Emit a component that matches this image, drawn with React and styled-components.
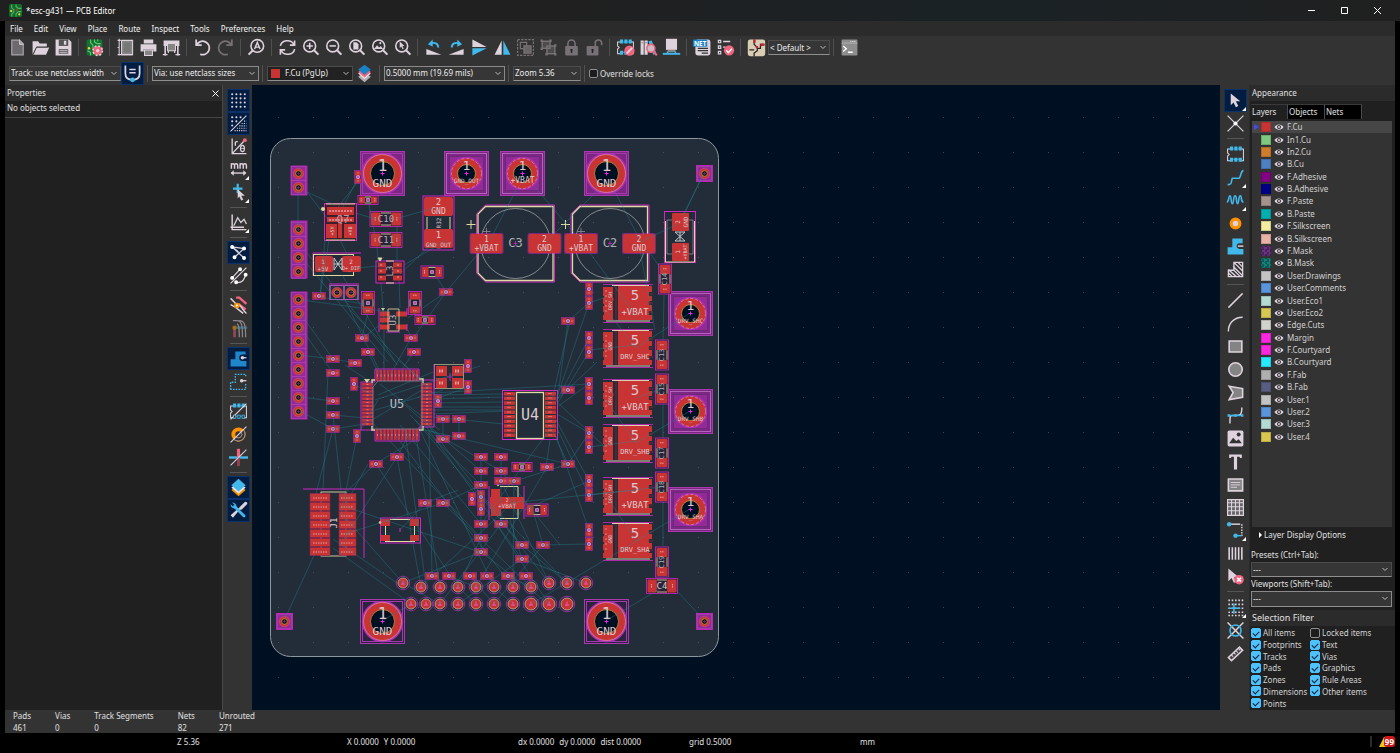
import React from 'react';
import styled, {createGlobalStyle} from "styled-components";

const ink = "#ded3dd";
const blue = "#42b8eb";
const pink = "#f2647e";
const grey = "#848484";
const dim = "#777176";

const GlobalStyle = createGlobalStyle`
    * {
        box-sizing: border-box;
    }
    body {
        margin: 0;
        background-color: black;
        color: #e0e0e0;
        font-family: "Noto Sans", "Open Sans", sans-serif;
        font-size: 8px;
        line-height: 12px;
    }
    button, select, input {
        font: inherit;
        color: inherit;
        margin: 0;
    }
`;

const Window = styled.div`
    height: 100vh;
    min-height: 740px;
    display: flex;
    flex-direction: column;
    overflow: hidden;
`;

const TitleBar = styled.header`
    height: 21px;
    display: flex;
    align-items: center;
    padding: 0 6px 0 9px;
    background: linear-gradient(90deg, #202020 40%, #1a2226 70%, #202020);
`;

const Title = styled.h1`
    flex: 1;
    margin: 0 0 0 4px;
    font-size: 8px;
    font-weight: 400;
    color: white;
`;

const WindowButton = styled.button`
    width: 33px;
    height: 21px;
    padding: 0;
    border: 0;
    background-color: transparent;
    display: flex;
    align-items: center;
    justify-content: center;
`;

const Frame = styled.div`
    flex: 1;
    min-height: 0;
    margin: 0 5px;
    display: flex;
    flex-direction: column;
    background-color: #333333;
`;

const MenuBar = styled.nav`
    height: 15px;
    display: flex;
    align-items: center;
    gap: 11px;
    padding-left: 5px;
    background-color: #2b2b2b;
`;

const MenuLink = styled.a`
    color: #f2f2f2;
    text-decoration: none;
`;

const ToolBar = styled.div`
    height: ${props => props.$low ? "24px" : "25px"};
    display: flex;
    align-items: center;
    padding: ${props => props.$low ? "0 0 0 4px" : "0 0 2px 1px"};
`;

const ToolStrip = styled.div`
    width: 29px;
    padding: 4px 0 0 2px;
    display: flex;
    flex-direction: column;
    align-items: center;
    background-color: #333333;
    flex-shrink: 0;
`;

const ToolButton = styled.button`
    position: relative;
    width: 23px;
    height: 23px;
    flex-shrink: 0;
    padding: 0;
    border: 1px solid ${props => props.$active ? "#0a3168" : "transparent"};
    background-color: ${props => props.$active ? "#031d40" : "transparent"};
    display: flex;
    align-items: center;
    justify-content: center;
`;

const Corner = styled.span`
    position: absolute;
    right: 0;
    bottom: 0;
    border-left: 4px solid transparent;
    border-bottom: 4px solid white;
`;

const Divider = styled.span`
    width: 1px;
    height: 17px;
    margin: 0 4px 0 3px;
    background-color: #505050;
`;

const Rule = styled.span`
    width: 17px;
    height: 1px;
    margin: ${props => props.$wide ? "3px 0 4px" : "3px 0"};
    flex-shrink: 0;
    background-color: #555555;
`;

const Picker = styled.span`
    position: relative;
    display: block;
    width: ${props => props.$width};
    height: ${props => props.$tall ? "16px" : "15px"};
`;

const Select = styled.select`
    appearance: none;
    display: block;
    width: 100%;
    height: 100%;
    padding: 0 14px 0 ${props => props.$swatch ? "17px" : "1px"};
    border: 1px solid ${props => props.$bright ? "#8a8a8a" : "#4c4c4c"};
    border-bottom-color: #8f8f8f;
    border-radius: 0;
    background-color: ${props => props.$swatch ? "#222222" : "#363636"};
    color: #ececec;
`;

const Chevron = styled.svg`
    position: absolute;
    right: 4px;
    top: 5px;
    width: 6px;
    height: 5px;
    pointer-events: none;
`;

const PickerSwatch = styled.span`
    position: absolute;
    left: 4px;
    top: 3px;
    width: 9px;
    height: 9px;
    background-color: #c83434;
    pointer-events: none;
`;

const CheckLabel = styled.label`
    display: flex;
    align-items: center;
    gap: 2px;
    line-height: 11px;
    white-space: nowrap;
`;

const CheckBox = styled.input`
    appearance: none;
    width: ${props => props.$small ? "9px" : "10px"};
    height: ${props => props.$small ? "9px" : "10px"};
    border: 1px solid #8e8e8e;
    border-radius: 2px;
    background-color: #1d1d1d;
    display: grid;
    place-items: center;

    &:checked {
        border-color: #4cc2ff;
        background-color: #4cc2ff;
    }
    &:checked::after {
        content: "";
        width: 5px;
        height: 3px;
        border-left: 1px solid #123;
        border-bottom: 1px solid #123;
        transform: rotate(-45deg);
    }
`;

const Work = styled.main`
    flex: 1;
    min-height: 0;
    display: flex;
`;

const Properties = styled.aside`
    width: 218px;
    flex-shrink: 0;
    background-color: #202020;
    border-right: 1px solid #484848;
`;

const PanelHead = styled.div`
    height: 16px;
    flex-shrink: 0;
    display: flex;
    align-items: center;
    justify-content: space-between;
    padding: 0 2px;
    background-color: #2b2b2b;
`;

const PanelTitle = styled.h2`
    margin: 0;
    font-weight: 400;
    font-size: ${props => props.$large ? "9px" : "8px"};
`;

const CloseButton = styled.button`
    width: 9px;
    height: 9px;
    padding: 0;
    border: 0;
    background-color: transparent;
    display: flex;
`;

const EmptyNote = styled.p`
    margin: 0;
    padding: 1px 2px 3px;
    border-bottom: 1px solid #444444;
`;

const CanvasArea = styled.section`
    flex: 1;
    min-width: 0;
    background-color: #001023;
`;

const Drawing = styled.svg`
    display: block;
    width: 100%;
    height: 100%;
    font-family: "DejaVu Sans Mono", monospace;
`;

const Appearance = styled.aside`
    width: 146px;
    flex-shrink: 0;
    display: flex;
    flex-direction: column;
    background-color: #202020;
    border-left: 1px solid #2b2b2b;
`;

const Tabs = styled.div`
    display: flex;
    margin-top: 3px;
    padding-left: 1px;
`;

const Tab = styled.button`
    width: 37px;
    height: 15px;
    padding: 0 1px;
    border: 0;
    border-right: 1px solid #4a4a4a;
    border-top: 1px solid #3a3a3a;
    text-align: left;
    background-color: ${props => props.$active ? "#202020" : "black"};
`;

const LayerPane = styled.div`
    flex: 1;
    min-height: 0;
    margin: 2px 3px 0 2px;
    background-color: #333333;
`;

const LayerList = styled.ul`
    height: 322px;
    margin: 0;
    padding: 0;
    list-style: none;
    display: grid;
    grid-auto-rows: 1fr;
`;

const LayerRow = styled.li`
    display: flex;
    align-items: center;
    padding-left: 2px;
    background-color: ${props => props.$active ? "#464646" : "transparent"};
    color: #d2d2d2;
`;

const ActiveMark = styled.span`
    margin-right: 2px;
    border: 3px solid transparent;
    border-left: 5px solid ${props => props.$active ? "#4848f0" : "transparent"};
    border-right: 0;
`;

const Swatch = styled.span`
    width: 10px;
    height: 10px;
    margin-right: 3px;
    border: 1px solid rgba(0, 0, 0, 0.15);
    background: ${props => props.$check
        ? `conic-gradient(${props.$color} 25%, ${props.$check} 0 50%, ${props.$color} 0 75%, ${props.$check} 0) 0 0 / 5px 5px`
        : props.$color};
`;

const Eye = styled.svg`
    width: 10px;
    height: 8px;
    margin-right: 3px;
`;

const OptionsToggle = styled.button`
    height: 16px;
    margin-left: 9px;
    padding: 0;
    border: 0;
    background-color: transparent;
    display: flex;
    align-items: center;
    gap: 2px;
`;

const ToggleMark = styled.span`
    border: 3px solid transparent;
    border-left: 3px solid white;
    border-right: 0;
`;

const Fields = styled.div`
    display: flex;
    flex-direction: column;
    gap: 1px;
    padding: 6px 3px 3px 1px;
`;

const Filters = styled.div`
    height: 82px;
    margin: 1px 0 1px 1px;
    display: grid;
    grid-template-columns: 59px 1fr;
    grid-auto-rows: 1fr;
    align-items: center;
    color: #d2d2d2;
`;

const InfoStrip = styled.dl`
    height: 23px;
    margin: 0;
    padding-left: 8px;
    display: flex;
    gap: 24px;
    line-height: 12px;
`;

const InfoValue = styled.dd`
    margin: 0;
`;

const StatusBar = styled.footer`
    height: 20px;
    display: grid;
    grid-template-columns: 170px 171px 171px 171px 1fr auto;
    align-items: center;
    padding: 0 5px 3px 177px;
    background-color: black;
`;

const StatusPair = styled.span`
    display: flex;
    gap: 5px;
`;

const Alerts = styled.button`
    display: flex;
    align-items: center;
    padding: 0 0 0 7px;
    border: 0;
    border-left: 2px solid #2b2b2b;
    background-color: black;
`;

const Badge = styled.span`
    margin-left: -3px;
    padding: 0 1px;
    border-radius: 3px;
    line-height: 11px;
    font-weight: 700;
    background-color: #d01818;
    color: white;
`;

const Lens = ({children}) => (
    <>
        <circle cx="11" cy="10" r="7.5" fill="none" stroke={ink} strokeWidth="2"/>
        <path d="M16.5 15.5 22 21" stroke={ink} strokeWidth="2.6"/>
        {children}
    </>
);

const Footprint = () => (
    <>
        <path d="M6 5H2v5l2 2-2 2v6h4M18 5h4v15h-4" fill="none" stroke={ink} strokeWidth="1.3"/>
        <path d="M5 2h4v5H5zM10.5 2h4v5h-4zM16 2h4v5h-4zM5 16h4v5H5zM10.5 16h4v5h-4zM16 16h4v5h-4z" fill={blue}/>
        <path d="M5 5h15M5 18h15" stroke={blue}/>
    </>
);

const icons = {
    new: <><path d="M4 2h11l5 5v15H4z" fill="#a9a3a8"/><path d="M5.5 3.5h9v5h4v12h-13z" fill="#6d6a6d"/><path d="M14.5 2v6H20" fill="none" stroke={ink}/></>,
    open: <><path d="M2 21V4h7l2 3h9v4H7z" fill={ink}/><path d="M7 12h16l-4 9H3z" fill={ink}/><path d="m3 20 4-8.500h14" fill="none" stroke="#333"/></>,
    save: <><path d="M2 2h17l3 3v17H2z" fill={ink}/><path d="M6 2h12v8H6z" fill="#555"/><path d="M12.5 3.5h3v5h-3z" fill={ink}/><path d="M6 14h12v6H6z" fill="#5d5d5d"/><path d="M7 16h10M7 18.5h10" stroke={ink}/></>,
    board: <><rect x="2" y="2" width="20" height="20" rx="2" fill="#147332"/><path d="M7 2v4l3 3v4M12 2v3l3 2h5M3 16l4 2v4M16 2v2" fill="none" stroke="#5fc46b" strokeWidth="1.5"/><circle cx="5" cy="13" r="1.5" fill="#ffd54a"/><circle cx="16" cy="16" r="6" fill={pink}/><circle cx="16" cy="16" r="6" fill="none" stroke={ink} strokeWidth="2" strokeDasharray="2.4 2.3"/><circle cx="16" cy="16" r="2.2" fill={ink}/></>,
    page: <><path d="M7 3h14v18H7z" fill={grey} stroke={ink} strokeWidth="1.3"/><path d="M4 1v21M2 3h4M2 21h19M2 12h2" stroke={ink} strokeWidth="1.3"/><path d="M10 6h8v12h-8z" fill="#777"/></>,
    print: <><path d="M6 2h12v5H6zM2 8h20v9h-4v-3H6v3H2z" fill={ink}/><path d="M7 15h10v7H7z" fill={grey} stroke={ink} strokeWidth="1.3"/></>,
    plot: <><path d="M2 3h20v7H2zM3 10h2v12H3zM19 10h2v12h-2z" fill={ink}/><path d="M7 7h10v9H7z" fill={grey} stroke={ink} strokeWidth="1.3"/><path d="M8 16v3M16 16v3M1 21h6M17 21h6" stroke={ink} strokeWidth="1.5"/></>,
    undo: <path d="M4 2v7h7M4.5 9A8.5 8.5 0 1 1 9 20.5" fill="none" stroke={ink} strokeWidth="2.2"/>,
    redo: <path d="M20 2v7h-7M19.5 9A8.5 8.5 0 1 0 15 20.5" fill="none" stroke={dim} strokeWidth="2.2"/>,
    find: <><circle cx="13" cy="10" r="8" fill="none" stroke={ink} strokeWidth="2"/><path d="M7.5 15.5 2 21" stroke={ink} strokeWidth="2.6"/><path d="m9.5 14 3.5-8.500 3.500 8.500M10.5 11.5h5" fill="none" stroke={ink} strokeWidth="1.8"/></>,
    refresh: <path d="M3 10a9 8 0 0 1 17-2M21 3v6h-6M21 14a9 8 0 0 1-17 2M3 21v-6h6" fill="none" stroke={ink} strokeWidth="2"/>,
    zoomIn: <Lens><path d="M7 10h8M11 6v8" stroke={ink} strokeWidth="2"/></Lens>,
    zoomOut: <Lens><path d="M7 10h8" stroke={ink} strokeWidth="2"/></Lens>,
    zoomPage: <Lens><path d="M8 5.5h4l2.500 2.500v6.500H8z" fill={ink}/></Lens>,
    zoomObjects: <Lens><path d="m5 14 4-5 2.500 3 2-2 3 4z" fill={ink}/><circle cx="13" cy="6.5" r="1.3" fill={ink}/></Lens>,
    zoomSelection: <Lens><path d="m8.5 4.5 6 5.500H12l1.500 3.500-1.500.6-1.500-3.400-2 1.800z" fill={ink}/></Lens>,
    rotateLeft: <><path d="m3 14 19 7H3z" fill={ink}/><path d="M18 12c0-5-5-7-9-5" fill="none" stroke={blue} strokeWidth="2.4"/><path d="M11 2v9L5 8z" fill={blue}/></>,
    rotateRight: <><path d="M21 14 2 21h19z" fill={ink}/><path d="M6 12c0-5 5-7 9-5" fill="none" stroke={blue} strokeWidth="2.4"/><path d="M13 2v9l6-3z" fill={blue}/></>,
    flip: <><path d="M3 2v9.500h18z" fill={ink}/><path d="M3 22v-9h18z" fill={blue}/></>,
    mirror: <><path d="M11 3v18H2z" fill={ink}/><path d="M13 3v18h9z" fill={blue}/></>,
    group: <><path d="M2 2h20v20H2z" fill="none" stroke={dim} strokeWidth="1.5" strokeDasharray="3 1.5"/><path d="M5.5 5.5h8v8h-8z" fill="none" stroke={dim} strokeWidth="1.5"/><path d="M10 10h9v9h-9z" fill="#666" stroke={dim} strokeWidth="1.5"/></>,
    ungroup: <><path d="M4 4h10v9H4zM10 10h10v10H10z" fill="#4c4c4c" stroke={dim} strokeWidth="1.8"/><path d="M2 2h3v3H2zM13 2h3v3h-3zM2 12h3v3H2zM19 8h3v3h-3zM19 19h3v3h-3zM8 19h3v3H8z" fill={dim}/></>,
    lock: <><path d="M7.5 11V7a4.500 4.500 0 0 1 9 0v4" fill="none" stroke={dim} strokeWidth="2"/><rect x="4" y="10" width="16" height="12" rx="1.5" fill={dim}/><path d="M12 14v5M10.5 15h3" stroke="#222" strokeWidth="1.8"/></>,
    unlock: <><path d="M13 11V7a4 4 0 0 1 8-1v3" fill="none" stroke={dim} strokeWidth="2"/><rect x="2" y="10" width="15" height="12" rx="1.5" fill={dim}/><path d="M9.5 14v5M8 15h3" stroke="#222" strokeWidth="1.8"/></>,
    footprintEdit: <><Footprint/><circle cx="17" cy="16" r="6.5" fill={pink}/><path d="m13.5 19.5 7-7" stroke={ink} strokeWidth="2.5"/></>,
    library: <><path d="M2 3h4v18H2zM7 3h4v18H7z" fill={ink}/><path d="m12 4 4-1 6 17-4 1z" fill={blue}/><path d="M3 6h2M8 6h2" stroke="#666"/><circle cx="15" cy="13" r="5" fill="#c8c0c8" stroke={pink} strokeWidth="2"/><path d="m18.5 17 4 5" stroke={pink} strokeWidth="2.6"/></>,
    update: <><path d="M5 1h14v14H5z" fill={ink}/><path d="M7 15v3h10v-3" fill="#888"/><path d="M1 20h22" stroke={blue} strokeWidth="2.4"/><path d="M7 17v3M17 17v3" stroke={blue} strokeWidth="2"/></>,
    net: <><rect x="3" y="2" width="19" height="20" rx="3" fill={ink}/><path d="M6 13h13M6 16h13M11 19h8" stroke="#333" strokeWidth="1.5"/><path d="M0 2h18v9H0z" fill="#1a81c4"/><text x="9" y="9.5" fontSize="8" fontWeight="700" fill="white" textAnchor="middle">NET</text></>,
    drc: <><path d="M3 3h3v3H3zM3 10h3v3H3zM3 17h3v3H3z" fill="none" stroke={ink} strokeWidth="1.5"/><path d="M9 4.5h9M9 11.5h3" stroke={ink} strokeWidth="1.8"/><circle cx="16.5" cy="15.5" r="6.5" fill={pink}/><path d="m13 15.5 2.500 3 4.500-5" fill="none" stroke="white" strokeWidth="1.8"/></>,
    schematic: <><rect x="1" y="2" width="22" height="21" rx="3" fill="#d9cdb4"/><path d="M9 2v6l4 4v4l-4 3v4M13 13h4V8h5M3 15h6" fill="none" stroke="#222" strokeWidth="1.6"/><path d="M8 2h3v4H8zM17 7h5v3h-5zM11 10h3v3h-3z" fill="#c22639"/></>,
    terminal: <><rect x="2" y="2" width="20" height="20" rx="1" fill="#8e8e8e"/><path d="M2 6.5h20" stroke="#bbb"/><path d="M13 4.3h7" stroke="#ddd" strokeWidth="1.3" strokeDasharray="1.5 1"/><path d="m4 10 4 3.500L4 17M10 18h6" fill="none" stroke="white" strokeWidth="1.7"/></>,
    trackWidth: <><path d="M3 2v10c0 6 4 8 9 8s9-2 9-8V2" fill="none" stroke={ink} strokeWidth="2.2"/><path d="M8 7h8M8 11h8" stroke={ink} strokeWidth="1.8"/><circle cx="12" cy="20" r="3" fill={blue}/></>,
    layerPair: <><path d="m12 10 8 6-8 7-8-7z" fill="#b6b0b6"/><path d="m12 6 8 6-8 7-8-7z" fill="#eee8ee"/><path d="m12 4 8 6-8 7-8-7z" fill={pink}/><path d="m12 1 8 6-8 7-8-7z" fill="#1a81c4"/></>,
    grid: <path d="M4 4h16.200M4 9.3h16.200M4 14.6h16.200M4 20h16.200" stroke={ink} strokeWidth="2.6" strokeLinecap="round" strokeDasharray="0.01 5.3"/>,
    gridOverride: <><path d="M4 4h12M4 9.3h7M4 14.6h1" stroke={ink} strokeWidth="2.6" strokeLinecap="round" strokeDasharray="0.01 5.3"/><path d="M2 22 22 2" stroke={ink} strokeWidth="1.3"/><path d="M19 9h3M16 12h6M13 15h9M10 18h12M7 21h15" stroke={ink} strokeWidth="1.4" strokeDasharray="1.4 1.4"/></>,
    polar: <><path d="M4 2v19h18M4 21 19 5" fill="none" stroke={ink} strokeWidth="1.6"/><circle cx="20" cy="4" r="2.5" fill={pink}/><path d="M8 11V6M8 8c0-2 1-2.500 3-2" fill="none" stroke={ink} strokeWidth="1.7"/><ellipse cx="17" cy="14.5" rx="2.5" ry="4" fill="none" stroke={ink} strokeWidth="1.5"/><path d="M14.5 14.5h5" stroke={ink}/></>,
    mm: <><path d="M3 11V4M3 7c0-3 4-3 4 0v4M7 7c0-3 4-3 4 0v4M14 11V4M14 7c0-3 4-3 4 0v4M18 7c0-3 4-3 4 0v4" fill="none" stroke={ink} strokeWidth="1.8"/><path d="M3 16.5h18" stroke={ink} strokeWidth="1.7"/><path d="m6 13-4 3.500L6 20zM18 13l4 3.500-4 3.500z" fill={ink}/></>,
    cursor: <><path d="M11 1v12M5 7h12" stroke={blue} strokeWidth="2.8"/><path d="m11 8 9 8h-4.500l2.500 5-2.500 1-2.500-5-2 2.500z" fill={ink}/></>,
    axes: <><path d="M4 2v19h18M2 18h17" fill="none" stroke={ink} strokeWidth="1.8"/><path d="m6 16 5-10 4 6 4-4 3 6" fill="none" stroke={ink} strokeWidth="1.6"/></>,
    ratsnest: <><path d="m4 5 15 2M4 5l15 14M19 7 7 18M4 5l8 6" fill="none" stroke={ink} strokeWidth="1.5"/><path d="M4 5h.01M19 7h.01M19 19h.01M7 18h.01" stroke="white" strokeWidth="5" strokeLinecap="round"/></>,
    ratsnestCurve: <><path d="M2 22 22 2M4 15 14 4M9 21c8 1 11-4 12-11" fill="none" stroke={ink} strokeWidth="1.5"/><path d="M4 15h.01M14 4h.01M9 20.5h.01M21 11h.01" stroke="white" strokeWidth="5" strokeLinecap="round"/></>,
    highlightNet: <><path d="M9 2h4l9 8M12 10l9 7" fill="none" stroke={pink} strokeWidth="3"/><path d="m2 3 7 7c7 0 5 5 13 12M2 11l6 3 10 8" fill="none" stroke={ink} strokeWidth="1.8"/><circle cx="10" cy="12" r="3.5" fill="#ff9100"/><circle cx="10" cy="12" r="1.4" fill="white"/></>,
    dimNet: <><path d="M7 11v12" stroke="#8f4a56" strokeWidth="3.5"/><path d="M7 11h16" stroke="#2c6f8c" strokeWidth="3"/><path d="M5 2h5c6 0 7 6 7 21M10 6c3 1 3 8 3 17M13 2c7 0 8 6 8 21" fill="none" stroke="#8b8589" strokeWidth="1.6"/><circle cx="7" cy="11" r="2.8" fill="#a56a1c"/></>,
    zoneFill: <><path d="M2 22v-9h6V3h13v4h-4a4 4 0 0 0 0 8h5v7z" fill="#1f86c9"/><path d="M15 11h7" stroke={ink} strokeWidth="1.6"/><circle cx="17" cy="11" r="2.2" fill={ink}/></>,
    zoneOutline: <><path d="M2 22v-9h6V3h13v4M21 15v7H2" fill="none" stroke={blue} strokeWidth="1.7" strokeDasharray="2 1.5"/><circle cx="16" cy="11" r="2.2" fill={ink}/><path d="M16 11h6" stroke={ink} strokeWidth="1.6"/></>,
    padOutline: <><Footprint/><path d="M2 22 22 2" stroke={ink} strokeWidth="1.5"/><path d="M6 17h2v3H6zM11.5 17h2v3h-2zM17 17h2v3h-2z" fill="#333"/></>,
    viaOutline: <><circle cx="12" cy="12" r="6.5" fill="none" stroke="#ff9100" strokeWidth="5"/><path d="M6 18a8.500 8.500 0 0 0 12-12L15 9a4 4 0 0 1-6 6z" fill="#333" stroke="#9a9599" strokeWidth="1.2"/><path d="M2 22 22 2" stroke={ink} strokeWidth="1.5"/></>,
    trackOutline: <><path d="M0 12h24" stroke={blue} strokeWidth="3"/><path d="M12 1v11" stroke={pink} strokeWidth="4"/><path d="M12 12v11" stroke="#8f3f50" strokeWidth="4"/><path d="M2 22 22 2" stroke={ink} strokeWidth="1.3"/></>,
    layers: <><path d="m12 8 9 7-9 8-9-8z" fill="#f29100"/><path d="m12 6 9 6-9 8-9-8z" fill="#ece4ec"/><path d="m12 1 9 8-9 8-9-8z" fill={blue}/></>,
    tools: <><path d="M15 9 5 21l-3-3 10-9" fill={ink}/><path d="m15 9 6-6" stroke={ink} strokeWidth="4" strokeLinecap="round"/><path d="m7 7 12 12" stroke={blue} strokeWidth="3.5" strokeLinecap="round"/><path d="M2 4l4 4 2-2-4-4a5 5 0 0 1 5 7 5 5 0 0 1-7-5z" fill={blue}/></>,
    select: <path d="m6 3 12 10h-5.500l3 6-3 1.500-3-6L6 18z" fill={ink}/>,
    localRats: <><path d="m2 2 20 20M22 2 2 22" stroke={ink} strokeWidth="1.5"/><circle cx="12" cy="12" r="2.6" fill="white"/></>,
    footprint: <Footprint/>,
    route: <path d="M2 21c4 0 5-1 5-5l1-3h8c3 0 2-9 6-10" fill="none" stroke={blue} strokeWidth="2"/>,
    tune: <path d="M1 14c3 0 2-8 4-8s1 10 3 10 1-10 3.500-10 1 10 3 10 1-10 3.500-10 0 8 4 8" fill="none" stroke={blue} strokeWidth="2"/>,
    via: <circle cx="12" cy="12" r="5.5" fill={ink} stroke="#ff9100" strokeWidth="4"/>,
    zone: <><path d="M2 22v-9h6V2h13v6h-4a3.500 3.500 0 0 0 0 7h5v7z" fill={blue}/><path d="M15 11.5h7" stroke={ink} strokeWidth="1.8"/></>,
    keepout: <path d="m3 16 5 5M3 12l10 9M9 12l9 9M9 8l12 12M10 3l11 11M15 3l6 6M3 13h7V3h11v18H3z" fill="none" stroke={ink} strokeWidth="1.7"/>,
    line: <path d="M3 21 21 3" stroke={ink} strokeWidth="1.8"/>,
    arc: <path d="M3 22C3 12 10 4 21 4" fill="none" stroke={ink} strokeWidth="1.8"/>,
    rect: <path d="M4 5h16v14H4z" fill={grey} stroke={ink} strokeWidth="2"/>,
    circle: <circle cx="12" cy="12" r="8.5" fill={grey} stroke={ink} strokeWidth="2"/>,
    polygon: <path d="m4 4 17 3v11L4 21l5-9z" fill={grey} stroke={ink} strokeWidth="2"/>,
    bezier: <><path d="M5 22c0-12 0-10 6-10s9 1 9-10" fill="none" stroke={ink} strokeWidth="1.8"/><path d="M3 12h18" stroke={blue} strokeWidth="1.8"/><path d="M2 10.5h3v3H2zM10.5 10.5h3v3h-3zM19 10.5h3v3h-3z" fill={blue}/></>,
    image: <><rect x="2" y="2" width="20" height="20" rx="2" fill={ink}/><path d="m4 18 5-7 4 4 3-2 4 5z" fill="#333"/><circle cx="16" cy="7" r="2.5" fill="#333"/></>,
    text: <path d="M4 3h16v4.500h-2L17 6h-3v16h-4V6H7L6 7.500H4z" fill={ink}/>,
    textBox: <><path d="M3 5h18v15H3z" fill={grey} stroke={ink} strokeWidth="2"/><path d="M6 9.5h12M6 12.5h12M6 15.5h8" stroke={ink} strokeWidth="1.2"/></>,
    table: <><path d="M2 2h20v20H2z" fill="#666" stroke={ink} strokeWidth="1.5"/><path d="M2 6h20M2 11h20M2 16h20M7 2v20M12 2v20M17 2v20" stroke={ink} strokeWidth="1.3"/></>,
    dimension: <><path d="M4 4h14" stroke={ink} strokeWidth="1.8"/><path d="M20 4v15" stroke={ink} strokeWidth="1.8" strokeDasharray="2 1.3"/><path d="M12 18.5h8" stroke={blue} strokeWidth="1.8"/><circle cx="4" cy="4" r="2.8" fill={blue}/><circle cx="12" cy="18.5" r="2.8" fill={blue}/></>,
    barcode: <path d="M4 4v16M8 4v16M12 4v16M16 4v16M20 4v16" stroke={ink} strokeWidth="2"/>,
    remove: <><path d="m3 2 13 11h-6l3 6-3 1-3-6-4 4z" fill={ink}/><circle cx="16.5" cy="16" r="6" fill={pink}/><path d="m14 13.5 5 5M19 13.5l-5 5" stroke="white" strokeWidth="2"/></>,
    gridOrigin: <><path d="M3 3h19M3 8h19M3 13h19M3 18h19M3 22h19" stroke={ink} strokeWidth="2" strokeDasharray="2 2.2"/><path d="M4 13h14M10 7v13" stroke={blue} strokeWidth="2"/></>,
    drillOrigin: <><path d="m2 2 20 20M22 2 2 22" stroke={ink} strokeWidth="1.9"/><circle cx="12" cy="12" r="7" fill="none" stroke={blue} strokeWidth="2"/></>,
    ruler: <><path d="m3 17 14-13 4 4L7 21z" fill="#444" stroke={ink} strokeWidth="2"/><path d="m7 14 2 2M10 11l2 2M13 9l2 2M16 6l2 2" stroke={ink} strokeWidth="1.4"/></>,
};

const Icon = ({name}) => (
    <svg width="19" height="19" viewBox="0 0 24 24" aria-hidden="true">{icons[name]}</svg>
);

// "|" is a separator, "*" marks a pressed tool and "+" a tool with a flyout
const mainTools = "new open save | board | page print plot | undo redo | find | refresh zoomIn zoomOut zoomPage zoomObjects zoomSelection | rotateLeft rotateRight flip mirror group ungroup lock unlock | footprintEdit library update | net drc | schematic".split(" ");
const leftTools = "grid* gridOverride* polar mm+ cursor+ | axes+ | ratsnest* ratsnestCurve | highlightNet dimNet | zoneFill* zoneOutline | padOutline viaOutline trackOutline | layers* tools*".split(" ");
const rightTools = "select*+ localRats | footprint route+ tune+ via zone keepout | line arc rect circle polygon bezier image text textBox table dimension+ barcode remove | gridOrigin+ drillOrigin ruler".split(" ");

const Tools = ({items, separator}) => items.map((item, i) => {
    if (item === "|") return <React.Fragment key={i}>{separator}</React.Fragment>;
    const name = item.replace(/[*+]/g, "");
    return (
        <ToolButton key={i} aria-label={name} $active={item.includes("*")}>
            <Icon name={name}/>
            {item.includes("+") && <Corner/>}
        </ToolButton>
    );
});

const Combo = ({id, label, width, value, bright, swatch, tall}) => (
    <Picker $width={width} $tall={tall}>
        <Select id={id} aria-label={label} $bright={bright} $swatch={swatch} defaultValue={value}>
            <option>{value}</option>
        </Select>
        {swatch && <PickerSwatch/>}
        <Chevron viewBox="0 0 6 5"><path d="m0.5 1 2.500 2.500L5.500 1" fill="none" stroke="#b8b8b8"/></Chevron>
    </Picker>
);

const layers = [
    ["F.Cu", "#c83434"], ["In1.Cu", "#7fc87f"], ["In2.Cu", "#ce7d2c"], ["B.Cu", "#4d7fc4"],
    ["F.Adhesive", "#840084"], ["B.Adhesive", "#000084"], ["F.Paste", "#a4928c"], ["B.Paste", "#00b0b0"],
    ["F.Silkscreen", "#f2eda1"], ["B.Silkscreen", "#e8b2a7"],
    ["F.Mask", "#6b3480", "#4a2360"], ["B.Mask", "#148078", "#0a5c58"],
    ["User.Drawings", "#c2c2c2"], ["User.Comments", "#5994dc"], ["User.Eco1", "#b4dbd2"], ["User.Eco2", "#d8c852"],
    ["Edge.Cuts", "#d0d2cd"], ["Margin", "#ff26e2"], ["F.Courtyard", "#ff26e2"], ["B.Courtyard", "#26e9ff"],
    ["F.Fab", "#afafaf"], ["B.Fab", "#585d84"],
    ["User.1", "#c2c2c2"], ["User.2", "#5994dc"], ["User.3", "#b4dbd2"], ["User.4", "#d8c852"],
];

const filters = ["All items", "Locked items", "Footprints", "Text", "Tracks", "Vias", "Pads", "Graphics", "Zones", "Rule Areas", "Dimensions", "Other items", "Points"];

const info = [["Pads", 461], ["Vias", 0], ["Track Segments", 0], ["Nets", 82], ["Unrouted", 271]];

/* ---- board ---- */

const copper = "#c83434";
const mask = "#922a98";
const court = "#d026c4";
const silk = "#e0dba0";
const hole = "#001023";
const label = "#dccace";

const mounts = [
    [382.5, 173.5, "GND", "plated"], [606.5, 173.5, "GND", "plated"],
    [382.5, 621.5, "GND", "open"], [606.5, 621.5, "GND", "open"],
    [466.5, 173.5, "GND_OUT"], [522.5, 173.5, "+VBAT"],
    [690.5, 313.5, "DRV_SHC"], [690.5, 411.5, "DRV_SHB"], [690.5, 509.5, "DRV_SHA"],
];

const headers = [[166, [173, 187]], [221, [229, 243, 257, 271]], [292, [299, 313, 327, 341, 355, 369, 383, 397, 411]]];

const chips = [
    [319, 296], [446, 292], [362, 338], [411, 338], [368, 352], [414, 352], [333, 359], [333, 373], [355, 363],
    [333, 401], [333, 415], [333, 429], [397, 457], [376, 464], [443, 419], [459, 419], [459, 436], [443, 439],
    [481, 457], [501, 457], [481, 471], [501, 471], [481, 485], [501, 481], [514, 481], [481, 524], [501, 524],
    [481, 538], [481, 552], [425, 503], [443, 503], [432, 576], [449, 576], [470, 576], [487, 576], [508, 576],
    [526, 576], [568, 321], [568, 390], [568, 464], [547, 467], [522, 545], [543, 545], [522, 559],
];

const uprightChips = [
    [358, 177], [354, 384], [357, 436], [468, 366], [468, 387], [438, 401], [472, 499], [481, 497], [481, 509],
    [589, 289], [589, 303], [589, 338], [589, 352], [589, 384], [589, 398],
    [589, 433], [589, 447], [589, 481], [589, 495], [589, 530], [589, 544],
];

// x, y, width, height, upright, text
const passives = [
    [368, 200, 20, 9, 0, ""], [386, 219, 32, 15, 0, "C10"], [386, 240, 32, 15, 0, "C11"], [432, 272, 22, 12, 0, ""],
    [425, 320, 20, 9, 0, ""], [368, 303, 23, 13, 1, ""], [415, 303, 23, 13, 1, ""], [662, 586, 31, 15, 0, "C4"],
    [522, 467, 20, 9, 0, ""], [537, 510, 22, 12, 0, ""], [665, 279, 30, 13, 1, "C14"], [662, 355, 30, 13, 1, "C13"],
    [662, 389, 30, 13, 1, "C15"], [662, 453, 30, 13, 1, "C17"], [662, 487, 30, 13, 1, "C18"], [662, 562, 30, 13, 1, "C19"],
];

const fets = [[303, "+VBAT"], [348, "DRV_SHC"], [398, "+VBAT"], [443, "DRV_SHB"], [496, "+VBAT"], [541, "DRV_SHA"]];

const rounds = [
    [403, 583, 5], [421, 587, 5], [440, 587, 5], [458, 587, 5], [476, 587, 5], [494, 587, 5], [513, 587, 5], [531, 587, 5],
    [549, 583, 5], [567, 583, 5], [586, 583, 5], [411, 604, 5], [426, 604, 5], [440, 604, 5], [458, 604, 5],
    [476, 604, 5], [494, 604, 5], [513, 604, 5], [531, 604, 6], [549, 604, 6], [567, 604, 6],
];

const airwires = `298,187 298,229|307,192 335,205|307,192 330,222|357,183 338,207|357,180 343,207|356,213 375,219|399,218 434,208
397,226 397,265|377,245 378,265|325,240 320,296|329,240 320,296|340,240 350,260|355,268 380,266|307,253 395,362|302,258 388,362
342,275 397,365|381,283 384,320|399,280 400,308|404,265 447,240|400,274 434,242|446,292 487,243|434,273 446,292|446,292 408,318
446,292 414,337|302,300 390,312|319,297 365,304|368,313 362,337|384,330 384,372|408,330 411,337|300,313 333,359|300,327 333,373
300,355 333,359|368,352 378,372|414,352 400,372|411,338 390,375|362,338 384,322|376,240 368,200|517,188 490,240|534,186 580,240
598,190 546,242|613,188 640,240|702,176 684,215|678,224 640,242|648,250 665,275|590,253 636,316|640,250 655,330|568,321 589,303
568,321 558,395|570,321 552,400|589,338 556,402|589,303 606,297|589,303 556,400|664,295 663,340|690,313 636,348|589,352 557,404
589,350 636,345|606,310 636,348|683,215 704,174|433,395 504,394|433,399 504,397|433,403 504,402|433,407 504,407|433,410 504,410
433,414 504,411|433,417 504,424|432,393 589,384|468,387 433,400|557,399 568,390|557,407 589,384|557,414 589,433|556,420 589,481
556,426 589,495|552,430 568,464|556,436 589,530|550,440 546,467|557,402 605,447|567,390 597,362|589,447 636,441|662,389 636,398
690,411 636,443|636,443 606,400|663,404 663,438|589,433 568,464|568,464 512,482|690,509 636,541|636,541 606,495|589,495 636,490
663,502 663,546|589,544 543,545|665,586 607,620|676,590 704,620|640,539 531,604|589,481 524,510|662,487 510,503|284,621 315,553
315,497 333,429|323,490 328,372|341,490 333,415|341,497 375,464|341,515 357,436|345,505 368,464|333,539 400,585|333,548 411,604
346,507 480,552|342,514 403,583|345,534 443,503|340,545 397,457|300,411 333,429|300,397 333,401|333,415 365,418|333,429 365,424
357,436 378,400|355,363 333,359|354,384 372,395|375,464 415,440|397,457 408,436|376,464 458,587|397,457 421,587|370,420 481,538
405,430 426,587|415,430 440,587|420,430 494,587|400,425 481,524|425,430 568,464|405,405 481,471|410,415 481,485|415,420 522,545
425,425 522,559|395,435 513,587|428,425 549,583|430,430 501,471|425,385 350,310|385,382 345,300|424,382 398,360|375,385 345,365
459,419 459,436|443,419 443,439|429,430 432,576|375,410 443,390|378,395 433,372|375,400 480,366|372,420 430,385|380,384 440,430
425,503 458,490|443,503 481,485|425,503 400,530|443,503 531,587|481,457 481,552|501,457 501,524|501,471 560,545|501,481 549,583
514,481 513,587|522,467 481,524|547,467 476,587|505,510 421,587|501,524 440,604|481,538 458,587|481,552 403,583|481,552 549,604
522,545 567,583|543,545 494,604|522,559 586,583|522,559 458,604|487,500 567,583|493,519 549,604|510,520 522,559|531,504 543,545
449,576 476,587|470,576 494,604|508,576 531,587|411,604 382,621|403,583 440,604|458,587 476,604|494,587 513,604|557,420 522,467`
    .split(/[|\n]/).map(line => "M" + line.trim().replace(" ", "L")).join("");

const Ink = ({x, y, size, children, turn, color = label}) => (
    <text x={x} y={y} fontSize={size} fill={color} textAnchor="middle" dominantBaseline="central"
          transform={turn ? `rotate(-90 ${x} ${y})` : undefined}>{children}</text>
);

const Mount = ({x, y, name, kind}) => {
    const outer = kind ? 20 : 16;
    const inner = kind ? 12 : 9;
    return (
        <g>
            <rect x={x - 22} y={y - 22} width="44" height="44" fill={kind === "open" ? "#2b2340" : "#7d2784"} stroke="#a838ae"/>
            <rect x={x - 20} y={y - 20} width="40" height="40" fill="none" stroke={kind ? "#a438ac" : "#b063b8"}/>
            {!kind && <rect x={x - 17} y={y - 17} width="34" height="34" fill={mask} stroke="#6a2a78"/>}
            <circle cx={x} cy={y} r={outer} fill={copper} stroke="#b030b4" strokeWidth="1.5"/>
            <circle cx={x} cy={y} r={outer - 1} fill="none" stroke="#d9a0d0" strokeWidth="0.6" strokeDasharray={kind ? undefined : "3 2"}/>
            <circle cx={x} cy={y} r={inner} fill={hole} stroke="#c89632" strokeWidth="0.8"/>
            <path d={`M${x - 2} ${y}h4M${x} ${y - 2}v4`} stroke="#e828e0"/>
            <Ink x={x} y={y - 8} size={kind ? 16 : 13}>1</Ink>
            <Ink x={x} y={y + (kind ? 10 : 7)} size={kind ? 11 : name.length > 5 ? 6 : 8}>{name}</Ink>
        </g>
    );
};

const Pin = ({x, y}) => (
    <g>
        <rect x={x - 7} y={y - 7} width="14" height="14" fill="none" stroke="#a93fb0" strokeWidth="0.8"/>
        <circle cx={x} cy={y} r="5.2" fill={copper} stroke="#c9568c" strokeWidth="0.5"/>
        <circle cx={x} cy={y} r="2.8" fill={hole} stroke="#c89632" strokeWidth="0.8"/>
        <path d={`M${x - 1.5} ${y}h3M${x} ${y - 1.5}v3`} stroke="#8f2a98" strokeWidth="0.6"/>
    </g>
);

const Chip = ({x, y, upright}) => (
    <g transform={upright ? `rotate(90 ${x} ${y})` : undefined}>
        <rect x={x - 6.5} y={y - 3.5} width="13" height="7" fill="#6c2a5c" stroke="#b428a4" strokeWidth="0.6"/>
        <rect x={x - 6} y={y - 3} width="4.8" height="6" rx="1.5" fill={copper}/>
        <rect x={x + 1.2} y={y - 3} width="4.8" height="6" rx="1.5" fill={copper}/>
        <path d={`M${x - 4} ${y - 1}v2M${x + 4} ${y - 1}v2`} stroke="#dc8080" strokeWidth="0.8"/>
        <circle cx={x} cy={y} r="1.6" fill="#c052c0" stroke="#d6b8dc" strokeWidth="0.7"/>
    </g>
);

const Passive = ({x, y, w, h, upright, text}) => (
    <g transform={upright ? `rotate(-90 ${x} ${y})` : undefined}>
        <rect x={x - w / 2} y={y - h / 2} width={w} height={h} fill="#2a2338" stroke={court} strokeWidth="0.8"/>
        <rect x={x - w / 2 + 1} y={y - h / 2 + 1} width={w * 0.3} height={h - 2} rx="1" fill={copper}/>
        <rect x={x + w * 0.2 - 1} y={y - h / 2 + 1} width={w * 0.3} height={h - 2} rx="1" fill={copper}/>
        <path d={`M${x - w * 0.16} ${y - h / 2 + 1.5}h${w * 0.32}M${x - w * 0.16} ${y + h / 2 - 1.5}h${w * 0.32}`} stroke={silk} strokeWidth="0.8"/>
        <path d={`M${x - w * 0.34} ${y - 2}v4M${x + w * 0.34} ${y - 2}v4`} stroke="#e2a0a0" strokeDasharray="1.5 0.6"/>
        {text
            ? <Ink x={x} y={y} size={text === "C4" ? 9 : upright ? 7 : 9} color={text === "C4" ? label : "#aeb0b6"}>{text}</Ink>
            : <path d={`M${x - 1.5} ${y - 1.5}h3v3h-3z`} fill="#b44cb4" stroke="#d6b8dc" strokeWidth="0.6"/>}
    </g>
);

const Fet = ({y, name}) => (
    <g>
        <path d={`M603 ${y - 18.5}h50M603 ${y + 19.5}h50`} stroke={court} opacity="0.8"/>
        <path d={`M612 ${y - 17.5}h37M606 ${y + 18}h44`} stroke="#dcd2b0"/>
        <path d={`M603 ${y - 16}h10v33h-10v-5h1v-3h-1v-6h1v-2h-1v-6h1v-2h-1z`} fill={copper}/>
        <path d={`M618 ${y - 17}h34v6h-3v4h3v5h-3v4h3v6h-3v4h3v5h-34z`} fill={copper}/>
        <path d={`M616 ${y - 17}v34M648 ${y - 9}h5M648 ${y}h5M648 ${y + 9}h5`} stroke="#8b2434" strokeWidth="0.8"/>
        <path d={`M606 ${y - 13}v25`} stroke="#e29c9c" strokeWidth="0.8" strokeDasharray="2 3"/>
        <Ink x={610} y={y - 2} size={5} turn>{name === "+VBAT" ? "DRV_SH" : "GND"}</Ink>
        <Ink x={635} y={y - 8} size={14}>5</Ink>
        <Ink x={635} y={y + 9} size={name === "+VBAT" ? 9 : 7}>{name}</Ink>
    </g>
);

const BigCap = ({x, name}) => (
    <g>
        <path d={`M${x - 30} 205H${x + 39}V282H${x - 30}L${x - 39} 273V214Z`} fill="none" stroke={court}/>
        <path d={`M${x - 30} 206.5H${x + 37.5}V280.5H${x - 30}L${x - 37.5} 273V214Z`} fill="none" stroke={silk} strokeWidth="1.3"/>
        <circle cx={x} cy="243.5" r="35" fill="none" stroke="#afafaf" strokeWidth="0.7"/>
        <path d={`M${x - 49} 224.5h9M${x - 44.5} 220v9`} stroke={silk}/>
        <path d={`M${x - 33} 231.5h8M${x - 29} 228v7`} stroke="#8d9299" strokeWidth="0.8"/>
        <rect x={x - 46} y="233" width="34" height="21" rx="2" fill={court} opacity="0.5"/>
        <rect x={x + 12} y="233" width="34" height="21" rx="2" fill={court} opacity="0.5"/>
        <rect x={x - 45} y="234" width="32" height="19" rx="2" fill={copper}/>
        <rect x={x + 13} y="234" width="32" height="19" rx="2" fill={copper}/>
        <Ink x={x - 29} y={239} size={8}>1</Ink>
        <Ink x={x - 29} y={248} size={8}>+VBAT</Ink>
        <Ink x={x + 29} y={239} size={8}>2</Ink>
        <Ink x={x + 29} y={248} size={8}>GND</Ink>
        <Ink x={x} y={243} size={12} color="#aeb2b6">{name}</Ink>
        <path d={`M${x - 2} 243.5h4M${x} 241v5`} stroke="#c428c0" strokeWidth="0.8"/>
    </g>
);

const range = n => [...Array(n).keys()];

const Mcu = () => (
    <g>
        <path d="M375 369H419V380H434V427H419V441H375V430H361V382H375Z" fill="none" stroke={court}/>
        {range(12).map(i => (
            <g key={i} fill={copper} stroke="#9c2b6c" strokeWidth="0.5">
                <rect x={376 + i * 3.6} y="370" width="2.6" height="11"/>
                <rect x={376 + i * 3.6} y="429" width="2.6" height="11"/>
                <rect x="362" y={383 + i * 3.6} width="11" height="2.6"/>
                <rect x="421" y={383 + i * 3.6} width="11" height="2.6"/>
            </g>
        ))}
        <path d="M377 375.5h41M377 435h41M367.5 384v42M427 384v42" stroke="#dc9aa0" strokeWidth="2" strokeDasharray="1 2.6" opacity="0.7"/>
        <path d="M372 383v-3h3M419 379h4v4M423 426v4h-4M375 430h-3v-4" fill="none" stroke={silk} strokeWidth="1.4"/>
        <path d="M378 381h44v48H373V387Z" fill="none" stroke="#9a9ea5" strokeWidth="0.6"/>
        <path d="m364 379 3 4 3-4z" fill={silk}/>
        <Ink x={397} y={404} size={12} color="#c0c2c6">U5</Ink>
    </g>
);

const Driver = () => (
    <g>
        <rect x="502.5" y="390.5" width="55" height="49" fill="none" stroke={court}/>
        {range(10).map(i => (
            <g key={i} fill={copper}>
                <rect x="504" y={392 + i * 4.6} width="11" height="3.6"/>
                <rect x="545" y={392 + i * 4.6} width="11" height="3.6"/>
            </g>
        ))}
        <path d="M509 393v45M550 393v45" stroke="#dc9aa0" strokeWidth="4" strokeDasharray="1 3.6" opacity="0.6"/>
        <rect x="516.5" y="392.5" width="27" height="46" fill="#232d3a" stroke={silk} strokeWidth="1.3"/>
        <Ink x={530} y={415} size={15}>U4</Ink>
    </g>
);

const Socket = () => (
    <g>
        <path d="M303 489H364V558" fill="none" stroke={court}/>
        <rect x="321" y="492" width="25" height="64" fill="none" stroke={silk} strokeWidth="0.9"/>
        {range(7).map(i => (
            <g key={i}>
                <rect x="310" y={493.5 + i * 9} width="20" height="8" fill={copper} stroke="#8f2450" strokeWidth="0.6"/>
                <rect x="339" y={493.5 + i * 9} width="17" height="8" fill={copper} stroke="#8f2450" strokeWidth="0.6"/>
                <path d={`M313 ${498 + i * 9}h14M341 ${498 + i * 9}h12`} stroke="#e0a0a0" strokeWidth="1.2" strokeDasharray="1.5 1"/>
            </g>
        ))}
        <Ink x={334} y={523} size={9} turn>J1</Ink>
    </g>
);

const SmallParts = () => (
    <g>
        <rect x="324.5" y="203.5" width="32" height="37" fill="#3b1f2b" stroke={court}/>
        <path d="M327 207h12v8h-12zM342 207h12v8h-12zM327 217h12v5h-12zM342 217h12v5h-12zM326 224h11v14h-11zM338 207h4v31h-4zM344 224h12v14h-12z" fill={copper}/>
        <path d="M329 211h23M329 220h24" stroke="#e0a0a0" strokeWidth="1.5" strokeDasharray="2 1"/>
        <path d="M326 204h29M326 240h29" stroke={silk}/>
        <circle cx="323" cy="209" r="2" fill={silk}/>
        <Ink x={343} y={219} size={11} color="#b49aa2">Q7</Ink>
        <Ink x={332} y={231} size={5} turn>+5V</Ink>
        <Ink x={350} y={231} size={5} turn>+VB</Ink>

        <path d="M313 276V253H361" fill="none" stroke={court}/>
        <rect x="313.5" y="254.5" width="40" height="21" fill="none" stroke={silk}/>
        <rect x="315" y="256" width="18" height="16" rx="2" fill={copper}/>
        <rect x="342" y="256" width="19" height="16" rx="2" fill={copper}/>
        <path d="M334 258v12l8-12v12zM334 264h8" fill="none" stroke="#c8c8cc"/>
        <Ink x={323} y={261} size={6}>1</Ink>
        <Ink x={323} y={268} size={6}>+5V</Ink>
        <Ink x={351} y={261} size={6}>2</Ink>
        <Ink x={351} y={268} size={5}>D+_DIF</Ink>

        <path d="M329 284H359" stroke={court}/>
        <rect x="330" y="285.5" width="28" height="14" fill="none" stroke="#a7abb2"/>
        <path d="M344 286v13" stroke="#a7abb2"/>
        <Pin x={337} y={292.5}/>
        <Pin x={351} y={292.5}/>

        <rect x="376" y="261" width="28" height="22" fill="#2b2135" stroke={court}/>
        {[265, 271, 278].map(y => <path key={y} d={`M378 ${y}h8M393 ${y}h9`} stroke={copper} strokeWidth="5"/>)}
        <path d="M381 264v16M398 264v16" stroke="#e0a0a0" strokeDasharray="2 4"/>
        <path d="M386 261h8M386 283h8M378 258l2 3 2-3z" fill={silk} stroke={silk}/>
        <Ink x={390} y={271} size={9} turn color="#b8b2ba">L3</Ink>

        {[314, 320, 327].map(y => <path key={y} d={`M380 ${y}h10`} stroke={copper} strokeWidth="5"/>)}
        {[314, 327].map(y => <path key={y} d={`M396 ${y}h11`} stroke={copper} strokeWidth="5"/>)}
        <path d="M379 308v24M407 308v7M407 324v7M386 332h14" stroke={court}/>
        <path d="M388 309h11v22h-11z" fill="none" stroke={silk} strokeWidth="0.8"/>
        <path d="m381 308 2 3 2-3z" fill={silk}/>
        <Ink x={393} y={320} size={9} turn color="#b8b2ba">U3</Ink>

        <rect x="423" y="196" width="31" height="54" fill="none" stroke={court}/>
        <rect x="424" y="197" width="29" height="19" rx="2" fill={copper}/>
        <rect x="424" y="229" width="29" height="19" rx="2" fill={copper}/>
        <path d="M427 217v12M450 217v12" stroke={silk}/>
        <Ink x={438.5} y={202} size={9}>2</Ink>
        <Ink x={438.5} y={211} size={8}>GND</Ink>
        <Ink x={438.5} y={235} size={9}>1</Ink>
        <Ink x={438.5} y={244} size={6}>GND_OUT</Ink>
        <Ink x={438.5} y={223} size={6} turn>R32</Ink>

        <rect x="664.5" y="211.5" width="31" height="51" fill="none" stroke={court}/>
        <path d="M665.5 221v41h29v-41" fill="none" stroke={silk}/>
        <path d="M667 220h26v34h-26z" fill="none" stroke="#a7abb2" strokeWidth="0.6"/>
        <rect x="672" y="213" width="17" height="18" rx="1" fill={copper}/>
        <rect x="672" y="243" width="17" height="18" rx="1" fill={copper}/>
        <path d="M675 232h10l-10 9h10zM680 232v9" fill="none" stroke="#c8c8cc"/>
        <Ink x={677} y={222} size={6} turn>2</Ink>
        <Ink x={685} y={222} size={6} turn>GND</Ink>
        <Ink x={677} y={252} size={6} turn>1</Ink>
        <Ink x={685} y={252} size={5} turn>+VBAT</Ink>

        <rect x="434.5" y="364.5" width="29" height="24" fill="none" stroke={silk} strokeWidth="0.6"/>
        <path d="M436 366h11v10h-11zM452 366h11v10h-11zM436 378h11v10h-11zM452 378h11v10h-11z" fill={copper}/>
        <path d="M439 371h5M455 371h5M439 383h5M455 383h5" stroke="#e0a0a0" strokeWidth="3" strokeDasharray="1.5 1"/>
        <path d="M434 389v-25M447 377h6M450 373v8" stroke={court} strokeWidth="0.8"/>

        <rect x="380.5" y="518" width="40" height="25" fill="none" stroke={court}/>
        <rect x="385.5" y="519.5" width="29" height="22" fill="none" stroke={silk}/>
        <path d="M381 519h9v7h-9zM410 519h9v7h-9zM381 535h9v6h-9zM410 535h9v6h-9z" fill={copper}/>
        <circle cx="380" cy="522.5" r="1.3" fill={silk}/>
        <path d="M400 528v4" stroke={court}/>

        <path d="M489 486v34M524 486v33" stroke={court}/>
        <path d="M500 486.5h18v32h-18M496 483l2 3 2-3z" fill="none" stroke={silk}/>
        <path d="M491 489h9v8h-9zM490 497h34v12h-34zM491 509h10v7h-10z" fill={copper}/>
        <Ink x={507} y={500} size={5}>2</Ink>
        <Ink x={507} y={505} size={6}>+VBAT</Ink>
    </g>
);

const Board = () => (
    <Drawing role="img" aria-label="Board layout">
        <defs>
            <pattern id="dots" x="278" y="117" width="35" height="35" patternUnits="userSpaceOnUse">
                <rect width="1" height="1" fill="#5d7080" opacity="0.55"/>
            </pattern>
        </defs>
        <g transform="translate(-252 -85)">
            <rect x="270.5" y="138.5" width="448" height="518" rx="20" fill="#232d3a" stroke="#8f979c"/>
            <rect x="252" y="85" width="3000" height="2000" fill="url(#dots)"/>
            {headers.map(([top, pins]) => (
                <g key={top}>
                    <rect x="291" y={top} width="16" height={pins.length * 14 + 1} fill={mask} stroke={court} strokeWidth="0.8"/>
                    {pins.map(y => <Pin key={y} x={298.5} y={y + 0.5}/>)}
                </g>
            ))}
            {mounts.map(([x, y, name, kind]) => <Mount key={x + "," + y} x={x} y={y} name={name} kind={kind}/>)}
            {[[704.5, 173.5], [284.5, 621.5], [704.5, 621.5]].map(([x, y]) => (
                <g key={x + "," + y}>
                    <rect x={x - 8} y={y - 8} width="16" height="16" fill={mask} stroke={court} strokeWidth="0.8"/>
                    <Pin x={x} y={y}/>
                </g>
            ))}
            <BigCap x={515.5} name="C3"/>
            <BigCap x={610} name="C2"/>
            <SmallParts/>
            <Mcu/>
            <Driver/>
            <Socket/>
            {fets.map(([y, name]) => <Fet key={y} y={y} name={name}/>)}
            {passives.map(([x, y, w, h, upright, text]) => <Passive key={x + "," + y} x={x} y={y} w={w} h={h} upright={upright} text={text}/>)}
            {chips.map(([x, y]) => <Chip key={x + "," + y} x={x} y={y}/>)}
            {uprightChips.map(([x, y]) => <Chip key={x + "," + y} x={x} y={y} upright/>)}
            {rounds.map(([x, y, r]) => (
                <g key={x + "," + y}>
                    <circle cx={x} cy={y} r={r + 1.8} fill="none" stroke="#8d3098"/>
                    <circle cx={x} cy={y} r={r} fill={copper} stroke={silk} strokeWidth="0.6"/>
                    <path d={`M${x - 2} ${y + 1}h4M${x} ${y - 2.5}v4`} stroke="#e05ac0"/>
                </g>
            ))}
            <path d={airwires} fill="none" stroke="#1f8f98" strokeWidth="0.7" opacity="0.5"/>
        </g>
    </Drawing>
);

const App = () => (
    <>
        <GlobalStyle/>
        <Window>
            <TitleBar>
                <svg width="13" height="13" viewBox="0 0 24 24">
                    <rect width="24" height="24" rx="3" fill="#13682c"/>
                    <path d="M5 1v6l4 4v4l-4 4v4M13 1v4l4 3h6M23 14h-6l-4 4v5" fill="none" stroke="#4fb85c" strokeWidth="2"/>
                    <circle cx="4" cy="13" r="2" fill="#ffd54a"/>
                    <circle cx="19" cy="19" r="2" fill="#ffd54a"/>
                    <circle cx="14" cy="11" r="2" fill="#c83434"/>
                </svg>
                <Title>*esc-g431 — PCB Editor</Title>
                <WindowButton aria-label="Minimize">
                    <svg width="9" height="9"><path d="M1 4.5h7" stroke="white"/></svg>
                </WindowButton>
                <WindowButton aria-label="Maximize">
                    <svg width="9" height="9"><path d="M1.5 1.5h6v6h-6z" fill="none" stroke="white"/></svg>
                </WindowButton>
                <WindowButton aria-label="Close">
                    <svg width="9" height="9"><path d="m1 1 7 7M8 1 1 8" stroke="white"/></svg>
                </WindowButton>
            </TitleBar>
            <Frame>
                <MenuBar>
                    {["File", "Edit", "View", "Place", "Route", "Inspect", "Tools", "Preferences", "Help"].map(name => (
                        <MenuLink key={name} href="#">{name}</MenuLink>
                    ))}
                </MenuBar>
                <ToolBar>
                    <Tools items={mainTools} separator={<Divider/>}/>
                    <Combo label="Design variant" width="62px" value="< Default >"/>
                    <Divider/>
                    <ToolButton aria-label="terminal"><Icon name="terminal"/></ToolButton>
                </ToolBar>
                <ToolBar $low>
                    <Combo label="Track width" width="112px" value="Track: use netclass width"/>
                    <ToolButton aria-label="trackWidth" $active><Icon name="trackWidth"/></ToolButton>
                    <Divider/>
                    <Combo label="Via size" width="107px" value="Via: use netclass sizes" bright/>
                    <Divider/>
                    <Combo label="Active layer" width="86px" value="F.Cu (PgUp)" swatch/>
                    <ToolButton aria-label="layerPair"><Icon name="layerPair"/></ToolButton>
                    <Divider/>
                    <Combo label="Grid" width="121px" value="0.5000 mm (19.69 mils)" bright/>
                    <Divider/>
                    <Combo label="Zoom" width="68px" value="Zoom 5.36"/>
                    <Divider/>
                    <CheckLabel>
                        <CheckBox type="checkbox" $small/>
                        Override locks
                    </CheckLabel>
                </ToolBar>
                <Work>
                    <Properties>
                        <PanelHead>
                            <PanelTitle>Properties</PanelTitle>
                            <CloseButton aria-label="Close properties">
                                <svg width="9" height="9"><path d="m1.5 1.5 6 6M7.5 1.5l-6 6" stroke="white"/></svg>
                            </CloseButton>
                        </PanelHead>
                        <EmptyNote>No objects selected</EmptyNote>
                    </Properties>
                    <ToolStrip>
                        <Tools items={leftTools} separator={<Rule/>}/>
                    </ToolStrip>
                    <CanvasArea><Board/></CanvasArea>
                    <ToolStrip>
                        <Tools items={rightTools} separator={<Rule $wide/>}/>
                    </ToolStrip>
                    <Appearance>
                        <PanelHead><PanelTitle>Appearance</PanelTitle></PanelHead>
                        <Tabs>
                            <Tab $active>Layers</Tab>
                            <Tab>Objects</Tab>
                            <Tab>Nets</Tab>
                        </Tabs>
                        <LayerPane>
                            <LayerList>
                                {layers.map(([name, color, check], i) => (
                                    <LayerRow key={name} $active={i === 0}>
                                        <ActiveMark $active={i === 0}/>
                                        <Swatch $color={color} $check={check}/>
                                        <Eye viewBox="0 0 10 8">
                                            <path d="M0.5 4C2.5 0.5 7.5 0.5 9.5 4 7.5 7.5 2.5 7.5 0.5 4Z" fill={ink}/>
                                            <circle cx="5" cy="4" r="2" fill="#333"/>
                                            <circle cx="5" cy="4" r="1" fill={ink}/>
                                        </Eye>
                                        {name}
                                    </LayerRow>
                                ))}
                            </LayerList>
                        </LayerPane>
                        <OptionsToggle><ToggleMark/>Layer Display Options</OptionsToggle>
                        <Fields>
                            <label htmlFor="presets">Presets (Ctrl+Tab):</label>
                            <Combo id="presets" width="100%" value="---"/>
                            <label htmlFor="viewports">Viewports (Shift+Tab):</label>
                            <Combo id="viewports" width="100%" value="---" bright tall/>
                        </Fields>
                        <PanelHead><PanelTitle $large>Selection Filter</PanelTitle></PanelHead>
                        <Filters>
                            {filters.map(name => (
                                <CheckLabel key={name}>
                                    <CheckBox type="checkbox" defaultChecked={name !== "Locked items"}/>
                                    {name}
                                </CheckLabel>
                            ))}
                        </Filters>
                    </Appearance>
                </Work>
                <InfoStrip>
                    {info.map(([name, value]) => (
                        <div key={name}>
                            <dt>{name}</dt>
                            <InfoValue>{value}</InfoValue>
                        </div>
                    ))}
                </InfoStrip>
            </Frame>
            <StatusBar>
                <span>Z 5.36</span>
                <StatusPair><span>X 0.0000</span><span>Y 0.0000</span></StatusPair>
                <StatusPair><span>dx 0.0000</span><span>dy 0.0000</span><span>dist 0.0000</span></StatusPair>
                <span>grid 0.5000</span>
                <span>mm</span>
                <Alerts aria-label="Notifications">
                    <svg width="8" height="10" viewBox="0 0 8 10"><path d="M5 0 0 10h8V0z" fill="#f0c419"/></svg>
                    <Badge>99</Badge>
                </Alerts>
            </StatusBar>
        </Window>
    </>
);

export default App;
